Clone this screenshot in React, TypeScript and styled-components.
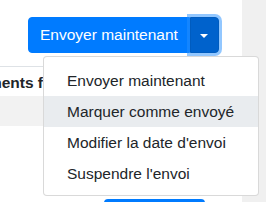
import React from "react";
import styled, { createGlobalStyle } from "styled-components";

const Global = createGlobalStyle`
  html, body { margin: 0; padding: 0; background: #fff; overflow: hidden; }
  body { font-family: "Liberation Sans", Arial, Helvetica, sans-serif; color: #212529; }
  * { box-sizing: border-box; }
`;

const Page = styled.div`
  display: flex;
  width: 266px;
  height: 202px;
  overflow: hidden;
`;

const Main = styled.div`
  width: 242px;
  flex: none;
  display: flex;
  flex-direction: column;
  & > * { flex-shrink: 0; }
`;

const Sidebar = styled.div`
  flex: 1;
  background: #f0f0f0;
`;

const Toolbar = styled.div`
  display: flex;
  align-items: flex-start;
  padding: 17px 0 0 28px;
  height: 66px;
`;

const Group = styled.div`
  position: relative;
  display: inline-flex;
  height: 36px;
`;

const Btn = styled.button<{ $split?: boolean }>`
  font-family: inherit;
  font-size: 15.5px;
  line-height: 22px;
  color: #fff;
  margin: 0;
  cursor: pointer;
  display: flex;
  align-items: center;
  justify-content: center;
  ${(p) =>
    p.$split
      ? `
    width: 29px;
    padding: 0;
    background: #0062cc;
    border: 1px solid #005cbf;
    border-radius: 0 4px 4px 0;
    box-shadow: 0 0 0 3px rgba(38, 143, 255, 0.5);
  `
      : `
    padding: 6px 11px;
    background: #007bff;
    border: 1px solid #007bff;
    border-radius: 4px 0 0 4px;
  `}
`;

const Caret = styled.span`
  display: block;
  width: 0;
  height: 0;
  border-top: 4.6px solid #fff;
  border-left: 4.6px solid transparent;
  border-right: 4.6px solid transparent;
  margin-top: 1px;
`;

const Menu = styled.div`
  position: absolute;
  top: calc(100% + 3px);
  left: 15px;
  width: 216px;
  background: #fff;
  border: 1px solid rgba(0, 0, 0, 0.15);
  border-radius: 4px;
  padding: 8px 0 6px;
  z-index: 10;
`;

const Item = styled.div<{ $active?: boolean }>`
  padding: 4px 23px;
  font-size: 15.5px;
  line-height: 23px;
  white-space: nowrap;
  color: #212529;
  background: ${(p) => (p.$active ? "#e9ecef" : "transparent")};
`;

const Table = styled.div`
  border-top: 1px solid #dee2e6;
  display: flex;
  flex-direction: column;
`;

const HeadRow = styled.div`
  height: 29px;
  display: flex;
  align-items: center;
  overflow: hidden;
  white-space: nowrap;
`;

const HeadText = styled.span`
  font-weight: bold;
  font-size: 15.5px;
  margin-left: -44px;
  margin-top: 3px;
`;

const Row = styled.div<{ $striped?: boolean }>`
  height: 30px;
  background: ${(p) => (p.$striped ? "#f2f2f2" : "#fff")};
`;

const Footer = styled.div`
  display: flex;
  padding: 43px 0 0 104px;
`;

const Primary = styled.div`
  width: 101px;
  height: 36px;
  background: #007bff;
  border-radius: 4px;
`;

export default function App() {
  return (
    <>
      <Global />
      <Page>
        <Main>
          <Toolbar>
            <Group>
              <Btn>Envoyer maintenant</Btn>
              <Btn $split aria-label="Plus d'options">
                <Caret />
              </Btn>
              <Menu>
                <Item>Envoyer maintenant</Item>
                <Item $active>Marquer comme envoyé</Item>
                <Item>Modifier la date d'envoi</Item>
                <Item>Suspendre l'envoi</Item>
              </Menu>
            </Group>
          </Toolbar>
          <Table>
            <HeadRow>
              <HeadText>Paiements fournisseurs</HeadText>
            </HeadRow>
            <Row $striped />
            <Row />
          </Table>
          <Footer>
            <Primary />
          </Footer>
        </Main>
        <Sidebar />
      </Page>
    </>
  );
}
